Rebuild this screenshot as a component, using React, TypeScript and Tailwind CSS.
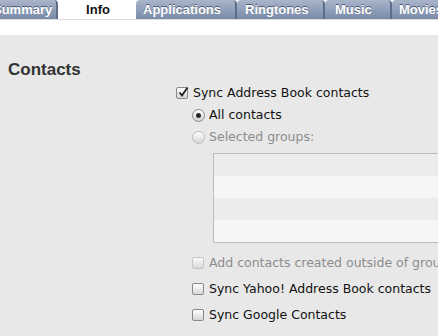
import React from 'react';

const tabs = [
  { label: 'Summary', w: 'w-[74px] -ml-[16px] mr-[2px]', pl: 'pl-[9px]' },
  { label: 'Info', w: 'w-[76px]', pl: 'pl-0', active: true },
  { label: 'Applications', w: 'w-[101px]', pl: 'pl-[7px]' },
  { label: 'Ringtones', w: 'w-[88px]', pl: 'pl-[8px]' },
  { label: 'Music', w: 'w-[67px]', pl: 'pl-[10px]' },
  { label: 'Movies', w: 'w-[80px]', pl: 'pl-[7px]' },
];

const Checkbox = ({ checked, disabled }: { checked?: boolean; disabled?: boolean }) => (
  <span
    className={`relative flex h-[12px] w-[12px] shrink-0 items-center justify-center rounded-[2px] border bg-gradient-to-b from-white to-[#d6d6d6] ${
      disabled ? 'border-[#b8b8b8] opacity-70' : 'border-[#8a8a8a]'
    }`}
  >
    {checked && (
      <svg width="12" height="12" viewBox="0 0 12 12" className="absolute -top-[2px] left-[0px]">
        <path d="M2.5 6.5 L5 9.5 L10.5 1.5" fill="none" stroke="#1f1f1f" strokeWidth="1.8" />
      </svg>
    )}
  </span>
);

const Radio = ({ checked, disabled }: { checked?: boolean; disabled?: boolean }) => (
  <span
    className={`flex h-[13px] w-[13px] shrink-0 items-center justify-center rounded-full border bg-gradient-to-b from-white to-[#d4d4d4] ${
      disabled ? 'border-[#bcbcbc]' : 'border-[#8a8a8a]'
    }`}
  >
    {checked && <span className="h-[5px] w-[5px] rounded-full bg-[#2a2a2a]" />}
  </span>
);

const App = () => {
  return (
    <div className="h-[336px] w-[438px] overflow-hidden bg-[#e8e8e8] font-['DejaVu_Sans',sans-serif] text-[12.5px] text-[#111]">
      {/* tab strip */}
      <div className="flex h-[19px] items-stretch bg-white font-['Liberation_Sans',Arial,sans-serif] text-[13px] font-bold">
        {tabs.map((t) =>
          t.active ? (
            <div
              key={t.label}
              className={`flex ${t.w} shrink-0 items-center justify-center rounded-t-[5px] bg-white text-[#111]`}
            >
              {t.label}
            </div>
          ) : (
            <div
              key={t.label}
              className={`flex ${t.w} ${t.pl} shrink-0 items-center whitespace-nowrap rounded-t-[4px] border-r-2 border-[#5d6d8a] bg-gradient-to-b from-[#a9b5ca] to-[#7a8aa8] text-white [text-shadow:0_-1px_0_#4a5874]`}
            >
              {t.label}
            </div>
          )
        )}
      </div>
      <div className="h-[16px] border-t border-[#dcdcdc] bg-white" />

      <div className="flex">
        <div className="w-[176px] shrink-0 pl-[8px] pt-[25px]">
          <h2 className="font-['Liberation_Sans',Arial,sans-serif] text-[17px] leading-[20px] font-bold text-[#333]">
            Contacts
          </h2>
        </div>
        <div className="flex flex-col pt-[47px]">
          <label className="flex h-[22px] items-center gap-[5px] whitespace-nowrap">
            <Checkbox checked />
            Sync Address Book contacts
          </label>
          <div className="ml-[16px] flex h-[22px] items-center gap-[4px] whitespace-nowrap">
            <Radio checked />
            All contacts
          </div>
          <div className="ml-[16px] flex h-[22px] items-center gap-[4px] whitespace-nowrap text-[#8c8c8c]">
            <Radio disabled />
            Selected groups:
          </div>
          <div className="ml-[37px] mt-[5px] w-[300px] border border-[#bdbdbd]">
            <div className="h-[22px] bg-[#ececec]" />
            <div className="h-[22px] bg-[#f6f6f6]" />
            <div className="h-[22px] bg-[#ececec]" />
            <div className="h-[22px] bg-[#f6f6f6]" />
          </div>
          <div className="ml-[16px] mt-[7px] flex h-[26px] items-center gap-[5px] whitespace-nowrap text-[#8c8c8c]">
            <Checkbox disabled />
            Add contacts created outside of groups
          </div>
          <div className="ml-[16px] flex h-[26px] items-center gap-[5px] whitespace-nowrap">
            <Checkbox />
            Sync Yahoo! Address Book contacts
          </div>
          <div className="ml-[16px] flex h-[26px] items-center gap-[5px] whitespace-nowrap">
            <Checkbox />
            Sync Google Contacts
          </div>
        </div>
      </div>
    </div>
  );
};

export default App;
